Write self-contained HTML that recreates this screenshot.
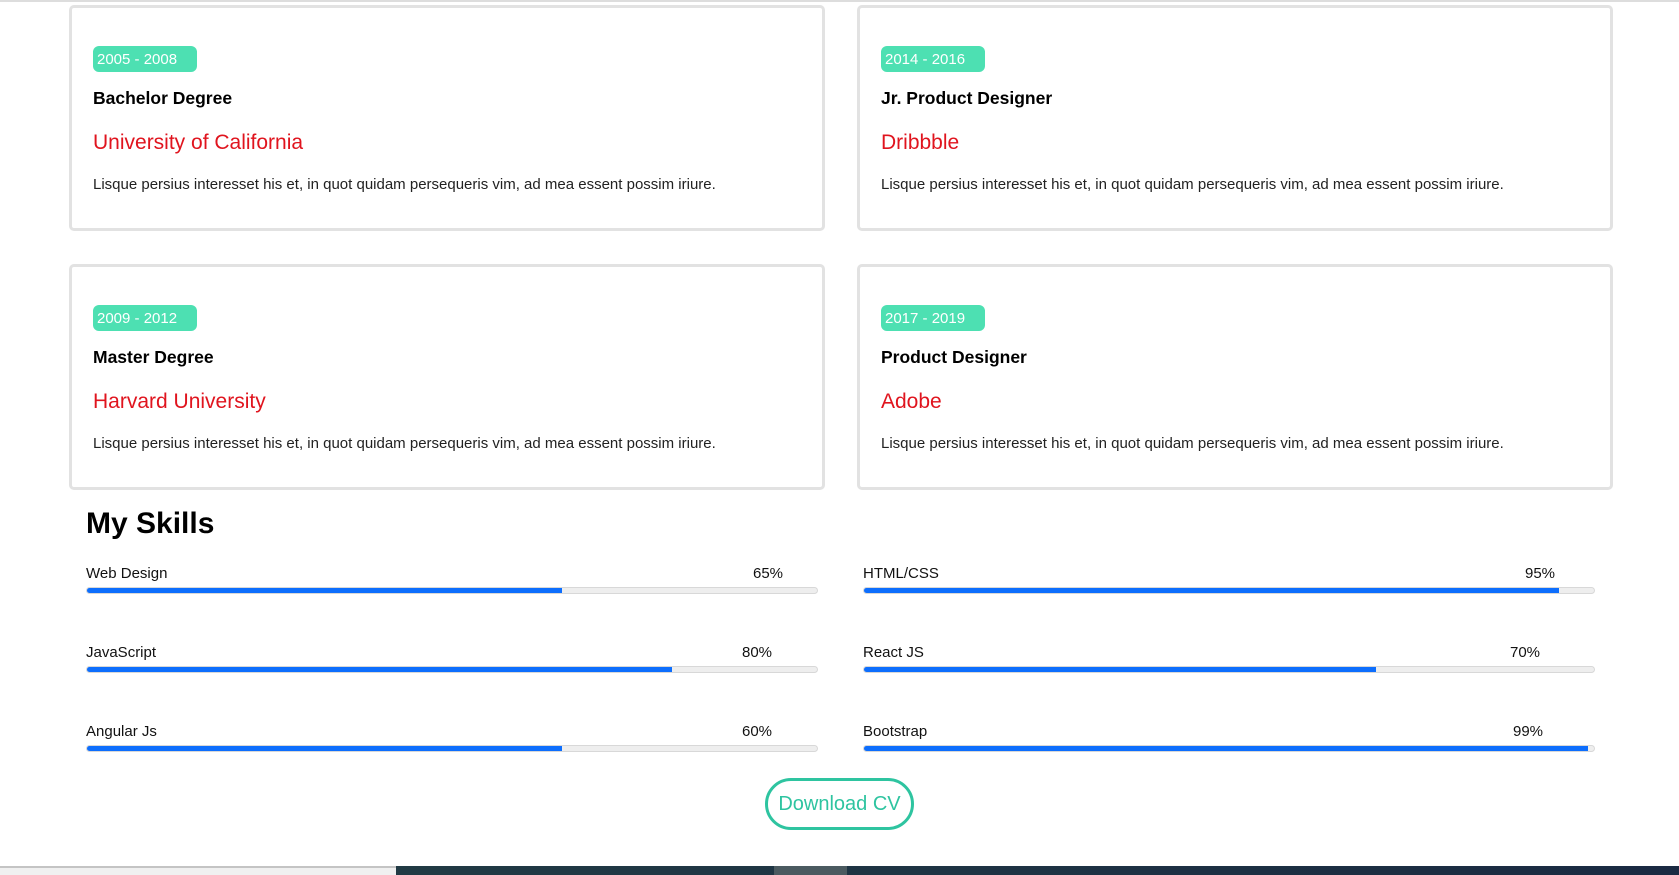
<!DOCTYPE html>
<html><head><meta charset="utf-8"><style>
*{margin:0;padding:0;box-sizing:border-box}
body{width:1679px;height:875px;position:relative;background:#fff;font-family:"Liberation Sans",Arial,sans-serif;overflow:hidden;color:#111}
.top{position:absolute;left:0;top:0;width:1679px;height:2px;background:#ddd}
.card{position:absolute;width:756px;height:226px;border:3px solid #e2e2e2;border-radius:5px;background:#fff}
.badge{position:absolute;left:21px;top:38px;height:26px;padding:0 20px 0 4px;background:#4de0b2;color:#fff;font-size:15px;line-height:27px;border-radius:6px}
.t{position:absolute;left:21px;top:80px;font-size:17.5px;font-weight:bold;color:#000}
.r{position:absolute;left:21px;top:123px;font-size:21px;color:#e0141e}
.p{position:absolute;left:21px;top:168px;font-size:15px;color:#222}
h2{position:absolute;left:86px;top:507px;font-size:30px;font-weight:bold;color:#000}
.lab{position:absolute;font-size:15px;color:#111}
.bar{position:absolute;height:7px;width:732px;background:#eee;border:1px solid #d8d8d8;border-radius:4px;overflow:hidden}
.bar i{position:absolute;left:0;top:0;bottom:0;background:#0d6efd}
.btn{position:absolute;left:765px;top:778px;width:149px;height:52px;border:3px solid #2ec4a0;border-radius:26px;color:#2ec4a0;font-size:20px;text-align:center;line-height:47px}
.bl{position:absolute;left:0;top:866px;width:396px;height:9px;background:#f0f0f0;border-top:2px solid #c4c4c4}
.br{position:absolute;left:396px;top:866px;width:1283px;height:9px;background:linear-gradient(90deg,#213a44,#1a2a42)}
.bm{position:absolute;left:774px;top:866px;width:73px;height:9px;background:#4b5a60}
</style></head><body>
<div class="top"></div>
<div class="card" style="left:69px;top:5px"><div class="badge">2005 - 2008</div><div class="t">Bachelor Degree</div><div class="r">University of California</div><div class="p">Lisque persius interesset his et, in quot quidam persequeris vim, ad mea essent possim iriure.</div></div>
<div class="card" style="left:857px;top:5px"><div class="badge">2014 - 2016</div><div class="t">Jr. Product Designer</div><div class="r">Dribbble</div><div class="p">Lisque persius interesset his et, in quot quidam persequeris vim, ad mea essent possim iriure.</div></div>
<div class="card" style="left:69px;top:264px"><div class="badge">2009 - 2012</div><div class="t">Master Degree</div><div class="r">Harvard University</div><div class="p">Lisque persius interesset his et, in quot quidam persequeris vim, ad mea essent possim iriure.</div></div>
<div class="card" style="left:857px;top:264px"><div class="badge">2017 - 2019</div><div class="t">Product Designer</div><div class="r">Adobe</div><div class="p">Lisque persius interesset his et, in quot quidam persequeris vim, ad mea essent possim iriure.</div></div>
<h2>My Skills</h2>
<div class="lab" style="left:86px;top:565px">Web Design</div><div class="lab" style="left:753px;top:565px">65%</div>
<div class="bar" style="left:86px;top:587px"><i style="width:475px"></i></div>
<div class="lab" style="left:86px;top:644px">JavaScript</div><div class="lab" style="left:742px;top:644px">80%</div>
<div class="bar" style="left:86px;top:666px"><i style="width:585px"></i></div>
<div class="lab" style="left:86px;top:723px">Angular Js</div><div class="lab" style="left:742px;top:723px">60%</div>
<div class="bar" style="left:86px;top:745px"><i style="width:475px"></i></div>
<div class="lab" style="left:863px;top:565px">HTML/CSS</div><div class="lab" style="left:1525px;top:565px">95%</div>
<div class="bar" style="left:863px;top:587px"><i style="width:695px"></i></div>
<div class="lab" style="left:863px;top:644px">React JS</div><div class="lab" style="left:1510px;top:644px">70%</div>
<div class="bar" style="left:863px;top:666px"><i style="width:512px"></i></div>
<div class="lab" style="left:863px;top:723px">Bootstrap</div><div class="lab" style="left:1513px;top:723px">99%</div>
<div class="bar" style="left:863px;top:745px"><i style="width:724px"></i></div>
<div class="btn">Download CV</div>
<div class="bl"></div><div class="br"></div><div class="bm"></div>
</body></html>
